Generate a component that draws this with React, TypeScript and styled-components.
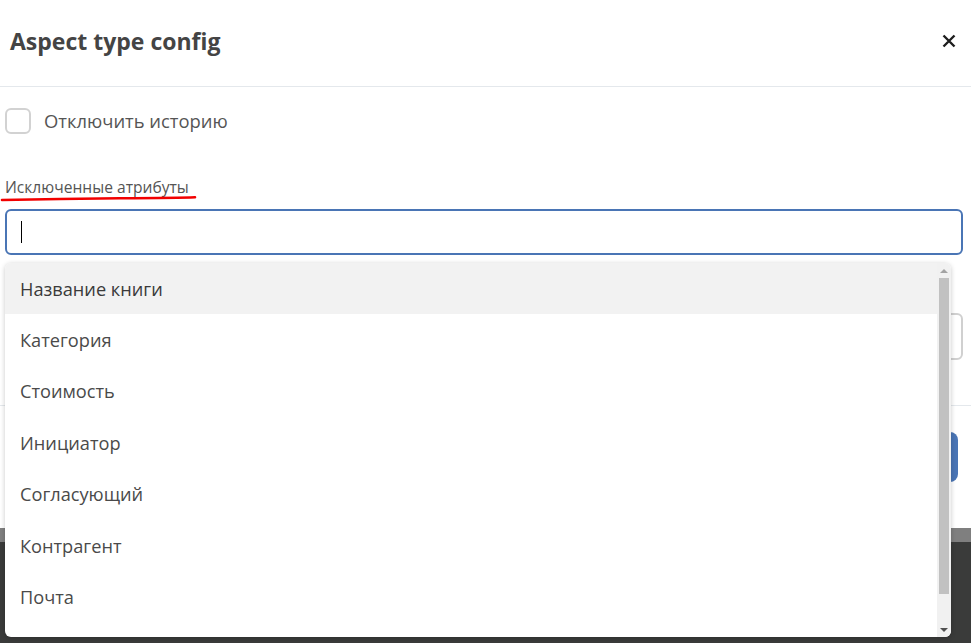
import React from "react";
import styled, { createGlobalStyle } from "styled-components";

const Global = createGlobalStyle`
  html, body { margin: 0; padding: 0; }
  body {
    font-family: "Open Sans", "Noto Sans", sans-serif;
    background: #3a3b3a;
    overflow: hidden;
  }
  * { box-sizing: border-box; }
`;

const Page = styled.div`
  display: flex;
  flex-direction: column;
  height: 643px;
`;

const Modal = styled.div`
  background: #fff;
  height: 528px;
  display: flex;
  flex-direction: column;
  flex-shrink: 0;
`;

const Strip = styled.div`
  height: 14px;
  background: #7f7f7f;
  flex-shrink: 0;
`;

const Backdrop = styled.div`
  flex: 1;
  background: #3a3b3a;
`;

const Header = styled.div`
  height: 87px;
  border-bottom: 1px solid #e4e8ec;
  display: flex;
  align-items: center;
  justify-content: space-between;
  padding: 0 14px 0 10px;
  flex-shrink: 0;
`;

const Title = styled.h2`
  margin: 0;
  font-size: 23px;
  font-weight: 700;
  color: #444;
  padding-bottom: 5px;
`;

const CloseButton = styled.button`
  border: 0;
  background: transparent;
  padding: 0;
  width: 16px;
  height: 16px;
  display: flex;
  align-items: center;
  justify-content: center;
  cursor: pointer;
  margin-bottom: 5px;
`;

const Body = styled.div`
  padding: 21px 8px 0 5px;
  display: flex;
  flex-direction: column;
  height: 319px;
  border-bottom: 1px solid #e4e8ec;
  flex-shrink: 0;
`;

const CheckRow = styled.label`
  display: flex;
  align-items: center;
  gap: 13px;
  height: 26px;
`;

const CheckBox = styled.span`
  width: 26px;
  height: 26px;
  border: 2px solid #d2d2d2;
  border-radius: 6px;
  background: #fff;
`;

const CheckLabel = styled.span`
  font-size: 18.4px;
  color: #555;
  padding-bottom: 1px;
`;

const Field = styled.div<{ $top: number }>`
  position: relative;
  margin-top: ${(p) => p.$top}px;
  display: flex;
  flex-direction: column;
`;

const FieldLabel = styled.div`
  position: relative;
  font-size: 15.6px;
  line-height: 20px;
  color: #555;
  height: 20px;
  margin-bottom: 12px;
`;

const Underline = styled.svg`
  position: absolute;
  left: -5px;
  top: 18px;
  overflow: visible;
`;

const InputBox = styled.div<{ $focused?: boolean }>`
  height: ${(p) => (p.$focused ? 46 : 47)}px;
  border: ${(p) => (p.$focused ? "2px solid #4a75b5" : "2px solid #d0d0d0")};
  border-radius: 6px;
  display: flex;
  align-items: center;
  padding-left: 14px;
`;

const Caret = styled.span`
  width: 1px;
  height: 22px;
  background: #000;
`;

const Dropdown = styled.div`
  position: absolute;
  left: 0;
  top: 86px;
  width: 946px;
  height: 374px;
  background: #fff;
  border-radius: 6px;
  box-shadow: 0 1px 5px rgba(0, 0, 0, 0.22);
  display: flex;
  overflow: hidden;
  z-index: 10;
`;

const List = styled.div`
  flex: 1;
  overflow: hidden;
`;

const Option = styled.div<{ $active?: boolean }>`
  height: 51.4px;
  display: flex;
  align-items: center;
  padding-left: 15px;
  font-size: 18.2px;
  color: ${(p) => (p.$active ? "#3a3a3a" : "#4a4a4a")};
  background: ${(p) => (p.$active ? "#f2f2f2" : "#fff")};
`;

const Scrollbar = styled.div`
  width: 14px;
  background: #f1f1f1;
  display: flex;
  flex-direction: column;
  align-items: center;
  flex-shrink: 0;
`;

const Arrow = styled.div<{ $down?: boolean }>`
  width: 0;
  height: 0;
  border-left: 4px solid transparent;
  border-right: 4px solid transparent;
  ${(p) =>
    p.$down
      ? "border-top: 4px solid #505050; margin-top: auto; margin-bottom: 5px;"
      : "border-bottom: 4px solid #a3a3a3; margin-top: 6px;"}
`;

const Thumb = styled.div`
  width: 10px;
  height: 316px;
  background: #c1c1c1;
  margin-top: 5px;
`;

const Footer = styled.div`
  flex: 1;
  display: flex;
  justify-content: flex-end;
  align-items: flex-start;
  padding: 26px 13px 0 0;
`;

const PrimaryButton = styled.button`
  height: 50px;
  padding: 0 28px;
  border: 0;
  border-radius: 8px;
  background: #4a75b5;
  color: #fff;
  font-family: inherit;
  font-size: 16px;
`;

const options = [
  "Название книги",
  "Категория",
  "Стоимость",
  "Инициатор",
  "Согласующий",
  "Контрагент",
  "Почта",
];

export default function App() {
  return (
    <>
      <Global />
      <Page>
        <Modal>
          <Header>
            <Title>Aspect type config</Title>
            <CloseButton aria-label="close">
              <svg width="14" height="14" viewBox="0 0 14 14">
                <path d="M1.5 1.5 L12.5 12.5 M12.5 1.5 L1.5 12.5" stroke="#1e1e1e" strokeWidth="2.4" strokeLinecap="butt" />
              </svg>
            </CloseButton>
          </Header>
          <Body>
            <CheckRow>
              <CheckBox />
              <CheckLabel>Отключить историю</CheckLabel>
            </CheckRow>
            <Field $top={43}>
              <FieldLabel>
                Исключенные атрибуты
                <Underline width="200" height="6">
                  <path d="M2 5 Q 60 3.6 120 3.2 T 195 2.2" stroke="#f20000" strokeWidth="2.6" fill="none" strokeLinecap="round" />
                </Underline>
              </FieldLabel>
              <InputBox $focused>
                <Caret />
              </InputBox>
              <Dropdown>
                <List>
                  {options.map((o, i) => (
                    <Option key={o} $active={i === 0}>
                      {o}
                    </Option>
                  ))}
                </List>
                <Scrollbar>
                  <Arrow />
                  <Thumb />
                  <Arrow $down />
                </Scrollbar>
              </Dropdown>
            </Field>
            <Field $top={26}>
              <FieldLabel />
              <InputBox />
            </Field>
          </Body>
          <Footer>
            <PrimaryButton>Сохранить</PrimaryButton>
          </Footer>
        </Modal>
        <Strip />
        <Backdrop />
      </Page>
    </>
  );
}
